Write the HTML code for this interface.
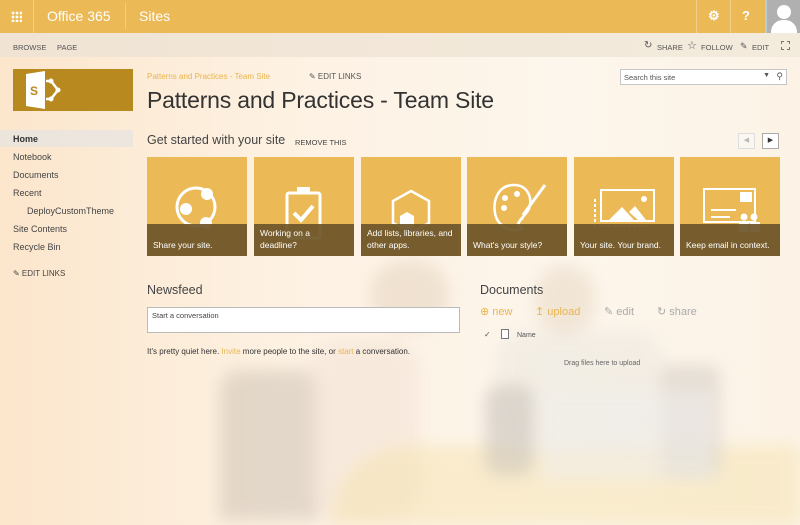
<!DOCTYPE html>
<html><head><meta charset="utf-8"><style>
*{margin:0;padding:0;box-sizing:border-box}
body{width:800px;height:516px;overflow:hidden;font-family:"Liberation Sans",sans-serif;position:relative;background:linear-gradient(90deg,#fce6cc 0%,#fdf1e2 35%,#fdf6ec 70%,#fcf3e6 100%)}
.bg{position:absolute;filter:blur(8px);opacity:.55}
.top{position:absolute;left:0;top:0;width:800px;height:33px;background:#ebba56;color:#fff}
.rib{position:absolute;left:0;top:33px;width:800px;height:24px;background:linear-gradient(90deg,#f0e3d4,#f3ebdc);font-size:7.5px;color:#555}
.abs{position:absolute}
.tile{position:absolute;top:157px;width:100px;height:99px;background:#ebba56;overflow:hidden}
.tile .cap{position:absolute;left:0;top:67px;width:100px;height:32px;background:rgba(110,86,42,.93);color:#fff;font-size:8.5px;padding:0 6px 5px;display:flex;align-items:flex-end;line-height:12px}
.tile svg{position:absolute;left:0;top:0}
.nav{position:absolute;left:13px;font-size:9px;color:#444}
</style></head><body>
<div class="bg" style="left:220px;top:370px;width:100px;height:150px;background:#cfc3b6;border-radius:20px 20px 0 0"></div>
<div class="bg" style="left:310px;top:340px;width:110px;height:180px;background:#f3e3d6;border-radius:30px"></div>
<div class="bg" style="left:370px;top:260px;width:80px;height:70px;background:#e6d4c0;border-radius:40px"></div>
<div class="bg" style="left:330px;top:445px;width:470px;height:80px;background:#f6e4b4;border-radius:160px 0 0 0"></div>
<div class="bg" style="left:495px;top:330px;width:170px;height:120px;background:#ece8e0;border-radius:30px"></div>
<div class="bg" style="left:485px;top:385px;width:50px;height:90px;background:#c9c2ba;border-radius:15px"></div>
<div class="bg" style="left:535px;top:265px;width:60px;height:70px;background:#e8d8c4;border-radius:35px"></div>
<div class="bg" style="left:660px;top:365px;width:60px;height:110px;background:#d3ccc4;border-radius:10px"></div>
<div class="bg" style="left:540px;top:390px;width:175px;height:90px;background:#f0eeec;border-radius:6px"></div>

<div class="top">
 <div class="abs" style="left:11px;top:11px;width:11px;height:11px;background:radial-gradient(circle,#fff 1.3px,transparent 1.5px) 0 0/4px 4px"></div>
 <div class="abs" style="left:33px;top:0;width:1px;height:33px;background:rgba(255,255,255,.3)"></div>
 <div class="abs" style="left:47px;top:8px;font-size:14px">Office 365</div>
 <div class="abs" style="left:125px;top:3px;width:1px;height:26px;background:rgba(255,255,255,.3)"></div>
 <div class="abs" style="left:139px;top:8px;font-size:14px">Sites</div>
 <div class="abs" style="left:696px;top:0;width:1px;height:33px;background:rgba(255,255,255,.3)"></div>
 <div class="abs" style="left:708px;top:8px;font-size:13px;font-weight:bold">⚙</div>
 <div class="abs" style="left:730px;top:0;width:1px;height:33px;background:rgba(255,255,255,.3)"></div>
 <div class="abs" style="left:742px;top:8px;font-size:13px;font-weight:bold">?</div>
 <div class="abs" style="left:765px;top:0;width:35px;height:33px;background:#b0b0b0;border-left:2px solid #b8cfd8;overflow:hidden">
  <div class="abs" style="left:10px;top:5px;width:14px;height:14px;border-radius:50%;background:#fff"></div>
  <div class="abs" style="left:4px;top:20px;width:26px;height:20px;border-radius:12px 12px 0 0;background:#fff"></div>
 </div>
</div>
<div class="rib">
 <div class="abs" style="left:13px;top:10px">BROWSE</div>
 <div class="abs" style="left:57px;top:10px">PAGE</div>
 <div class="abs" style="left:644px;top:7px;font-size:10px">↻</div>
 <div class="abs" style="left:657px;top:10px">SHARE</div>
 <div class="abs" style="left:687px;top:6px;font-size:11px">☆</div>
 <div class="abs" style="left:701px;top:10px">FOLLOW</div>
 <div class="abs" style="left:740px;top:8px;font-size:9px">✎</div>
 <div class="abs" style="left:752px;top:10px">EDIT</div>
 <div class="abs" style="left:781px;top:8px;width:9px;height:9px;border:1px dashed #777"></div>
</div>

<div class="abs" style="left:13px;top:69px;width:120px;height:42px;background:#b8891e">
 <svg width="60" height="42"><path d="M13 5 L32 2 L32 40 L13 37Z" fill="#fff"/><text x="17" y="26" font-size="12" font-weight="bold" fill="#b8891e" font-family="Liberation Sans">S</text>
 <path d="M33 12 L38 12 L45 21 L38 30 L33 30" stroke="#fff" stroke-width="2.5" fill="none"/><circle cx="38" cy="12" r="2.5" fill="#fff"/><circle cx="38" cy="30" r="2.5" fill="#fff"/><circle cx="45" cy="21" r="2.5" fill="#fff"/></svg>
</div>
<div class="abs" style="left:147px;top:72px;font-size:8px;color:#e9b54f">Patterns and Practices - Team Site</div>
<div class="abs" style="left:309px;top:72px;font-size:8px;color:#555">✎ EDIT LINKS</div>
<div class="abs" style="left:147px;top:87px;font-size:23px;color:#333;letter-spacing:-0.2px">Patterns and Practices - Team Site</div>
<div class="abs" style="left:620px;top:69px;width:167px;height:16px;background:#fff;border:1px solid #c6c6c6;font-size:7.5px;color:#555;padding:3px 3px">Search this site<span style="position:absolute;right:16px;top:2px;font-size:7px">▼</span><span style="position:absolute;right:3px;top:1px;font-size:9px">⚲</span></div>

<div class="abs" style="left:0;top:130px;width:133px;height:17px;background:rgba(230,228,226,.7)"></div>
<div class="nav" style="top:134px;font-weight:bold;color:#333">Home</div>
<div class="nav" style="top:152px">Notebook</div>
<div class="nav" style="top:170px">Documents</div>
<div class="nav" style="top:188px">Recent</div>
<div class="nav" style="top:206px;left:27px">DeployCustomTheme</div>
<div class="nav" style="top:224px">Site Contents</div>
<div class="nav" style="top:242px">Recycle Bin</div>
<div class="nav" style="top:269px;font-size:8px">✎ EDIT LINKS</div>

<div class="abs" style="left:147px;top:133px;font-size:12.5px;color:#444">Get started with your site</div>
<div class="abs" style="left:295px;top:138px;font-size:7.5px;color:#444">REMOVE THIS</div>
<div class="abs" style="left:738px;top:133px;width:17px;height:16px;border:1px solid #ddd;background:#fbf7f0;font-size:7px;color:#bbb;text-align:center;line-height:14px">◀</div>
<div class="abs" style="left:762px;top:133px;width:17px;height:16px;border:1px solid #aaa;background:#fff;font-size:7px;color:#333;text-align:center;line-height:14px">▶</div>

<div class="tile" style="left:147px"><svg width="100" height="99"><circle cx="49" cy="50" r="19" stroke="#fff" stroke-width="3" fill="none"/><circle cx="39" cy="52" r="6" fill="#fff"/><circle cx="60" cy="37" r="6" fill="#fff"/><circle cx="59" cy="66" r="6" fill="#fff"/></svg><div class="cap">Share your site.</div></div>
<div class="tile" style="left:254px"><svg width="100" height="99"><rect x="33" y="36" width="33" height="45" rx="2" stroke="#fff" stroke-width="3" fill="none"/><rect x="43" y="30" width="13" height="7" fill="#fff"/><path d="M40 56 L47 63 L59 49" stroke="#fff" stroke-width="4" fill="none"/></svg><div class="cap">Working on a deadline?</div></div>
<div class="tile" style="left:361px"><svg width="100" height="99"><path d="M50 34 L68 44 L68 66 L50 76 L32 66 L32 44Z" stroke="#fff" stroke-width="2.5" fill="none"/><path d="M39 59 L46 55 L53 59 L53 70 L46 74 L39 70Z" fill="#fff"/></svg><div class="cap">Add lists, libraries, and other apps.</div></div>
<div class="tile" style="left:467px"><svg width="100" height="99"><path d="M47 28 C30 28 26 45 28 56 C30 68 42 76 55 72 C46 66 58 60 62 52 C66 40 60 28 47 28Z" stroke="#fff" stroke-width="2.5" fill="none"/><circle cx="38" cy="41" r="3" fill="#fff"/><circle cx="50" cy="37" r="3" fill="#fff"/><circle cx="37" cy="51" r="3" fill="#fff"/><path d="M78 28 L56 58" stroke="#fff" stroke-width="3"/><path d="M54 60 L49 67 L57 62Z" fill="#fff"/></svg><div class="cap">What's your style?</div></div>
<div class="tile" style="left:574px"><svg width="100" height="99"><rect x="27" y="33" width="53" height="31" stroke="#fff" stroke-width="2" fill="none"/><path d="M21 42 L21 69 L73 69" stroke="#fff" stroke-width="2" stroke-dasharray="3 2" fill="none"/><path d="M35 63 L48 50 L60 63Z M55 55 L61 49 L72 63 L64 63Z" fill="#fff"/><circle cx="70" cy="42" r="3" fill="#fff"/></svg><div class="cap">Your site. Your brand.</div></div>
<div class="tile" style="left:680px"><svg width="100" height="99"><rect x="24" y="32" width="51" height="33" stroke="#fff" stroke-width="2" fill="none"/><rect x="60" y="35" width="12" height="10" fill="#fff"/><path d="M31 53 L56 53 M31 60 L50 60" stroke="#fff" stroke-width="2"/><circle cx="64" cy="60" r="3.5" fill="#fff"/><circle cx="74" cy="60" r="3.5" fill="#fff"/><rect x="59" y="65" width="10" height="10" fill="#fff"/><rect x="70" y="65" width="10" height="10" fill="#fff"/></svg><div class="cap" style="white-space:nowrap">Keep email in context.</div></div>

<div class="abs" style="left:147px;top:283px;font-size:12.5px;color:#444">Newsfeed</div>
<div class="abs" style="left:147px;top:307px;width:313px;height:26px;background:#fff;border:1px solid #bbb;font-size:7.5px;color:#444;padding:3px 4px">Start a conversation</div>
<div class="abs" style="left:147px;top:347px;font-size:8px;color:#333">It's pretty quiet here. <span style="color:#e9b54f">Invite</span> more people to the site, or <span style="color:#e9b54f">start</span> a conversation.</div>

<div class="abs" style="left:480px;top:283px;font-size:12.5px;color:#444">Documents</div>
<div class="abs" style="left:480px;top:305px;font-size:11px;color:#e9b54f">⊕ new</div>
<div class="abs" style="left:535px;top:305px;font-size:11px;color:#e9b54f">↥ upload</div>
<div class="abs" style="left:604px;top:305px;font-size:11px;color:#aaa">✎ edit</div>
<div class="abs" style="left:657px;top:305px;font-size:11px;color:#aaa">↻ share</div>
<div class="abs" style="left:484px;top:330px;font-size:8px;color:#555">✓</div>
<div class="abs" style="left:501px;top:329px;width:8px;height:10px;border:1px solid #777;background:#fff"></div>
<div class="abs" style="left:517px;top:332px;font-size:7px;color:#555">Name</div>
<div class="abs" style="left:564px;top:360px;font-size:7px;color:#666">Drag files here to upload</div>
</body></html>
